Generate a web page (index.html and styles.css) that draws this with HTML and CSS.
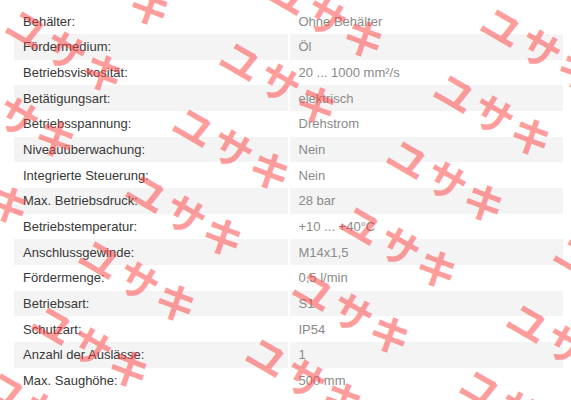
FILE: index.html
```html
<!DOCTYPE html>
<html lang="de">
<head>
<meta charset="utf-8">
<title>Technische Daten</title>
<link rel="stylesheet" href="styles.css">
</head>
<body>
<div class="page">
  <div class="specs">
    <div class="row"><div class="label">Behälter:</div><div class="value">Ohne Behälter</div></div>
    <div class="row"><div class="label">Fördermedium:</div><div class="value">Öl</div></div>
    <div class="row"><div class="label">Betriebsviskosität:</div><div class="value">20 ... 1000 mm²/s</div></div>
    <div class="row"><div class="label">Betätigungsart:</div><div class="value">elektrisch</div></div>
    <div class="row"><div class="label">Betriebsspannung:</div><div class="value">Drehstrom</div></div>
    <div class="row"><div class="label">Niveauüberwachung:</div><div class="value">Nein</div></div>
    <div class="row"><div class="label">Integrierte Steuerung:</div><div class="value">Nein</div></div>
    <div class="row"><div class="label">Max. Betriebsdruck:</div><div class="value">28 bar</div></div>
    <div class="row"><div class="label">Betriebstemperatur:</div><div class="value">+10 ... +40°C</div></div>
    <div class="row"><div class="label">Anschlussgewinde:</div><div class="value">M14x1,5</div></div>
    <div class="row"><div class="label">Fördermenge:</div><div class="value">0,5 l/min</div></div>
    <div class="row"><div class="label">Betriebsart:</div><div class="value">S1</div></div>
    <div class="row"><div class="label">Schutzart:</div><div class="value">IP54</div></div>
    <div class="row"><div class="label">Anzahl der Auslässe:</div><div class="value">1</div></div>
    <div class="row"><div class="label">Max. Saughöhe:</div><div class="value">500 mm</div></div>
  </div>
</div>
<svg class="watermark" width="571" height="400" viewBox="0 0 571 400" aria-hidden="true">
  <g class="wm-text">
    <text transform="translate(113.5 -17) rotate(30)" x="-44 0 44" y="0">ユサキ</text>
    <text transform="translate(327.5 15) rotate(30)" x="-44 0 44" y="0">ユサキ</text>
    <text transform="translate(541.5 47) rotate(30)" x="-44 0 44" y="0">ユサキ</text>
    <text transform="translate(374.5 -51) rotate(30)" x="-44 0 44" y="0">ユサキ</text>
    <text transform="translate(588.5 -19) rotate(30)" x="-44 0 44" y="0">ユサキ</text>
    <text transform="translate(66.5 49) rotate(30)" x="-44 0 44" y="0">ユサキ</text>
    <text transform="translate(280.5 81) rotate(30)" x="-44 0 44" y="0">ユサキ</text>
    <text transform="translate(494.5 113) rotate(30)" x="-44 0 44" y="0">ユサキ</text>
    <text transform="translate(19.5 115) rotate(30)" x="-44 0 44" y="0">ユサキ</text>
    <text transform="translate(233.5 147) rotate(30)" x="-44 0 44" y="0">ユサキ</text>
    <text transform="translate(447.5 179) rotate(30)" x="-44 0 44" y="0">ユサキ</text>
    <text transform="translate(-27.5 181) rotate(30)" x="-44 0 44" y="0">ユサキ</text>
    <text transform="translate(186.5 213) rotate(30)" x="-44 0 44" y="0">ユサキ</text>
    <text transform="translate(400.5 245) rotate(30)" x="-44 0 44" y="0">ユサキ</text>
    <text transform="translate(614.5 277) rotate(30)" x="-44 0 44" y="0">ユサキ</text>
    <text transform="translate(139.5 279) rotate(30)" x="-44 0 44" y="0">ユサキ</text>
    <text transform="translate(353.5 311) rotate(30)" x="-44 0 44" y="0">ユサキ</text>
    <text transform="translate(567.5 343) rotate(30)" x="-44 0 44" y="0">ユサキ</text>
    <text transform="translate(92.5 345) rotate(30)" x="-44 0 44" y="0">ユサキ</text>
    <text transform="translate(306.5 377) rotate(30)" x="-44 0 44" y="0">ユサキ</text>
    <text transform="translate(520.5 409) rotate(30)" x="-44 0 44" y="0">ユサキ</text>
    <text transform="translate(45.5 411) rotate(30)" x="-44 0 44" y="0">ユサキ</text>
    <text transform="translate(259.5 443) rotate(30)" x="-44 0 44" y="0">ユサキ</text>
  </g>
</svg>
</body>
</html>
```

FILE: styles.css
```css
html, body {
  margin: 0;
  padding: 0;
  background: #ffffff;
}

body {
  width: 571px;
  height: 400px;
  overflow: hidden;
  position: relative;
  font-family: "Liberation Sans", Arial, sans-serif;
  font-size: 13px;
}

.page {
  padding: 8.33px 8px 0 14px;
}

.specs {
  width: 549px;
  display: flex;
  flex-direction: column;
}

.row {
  display: grid;
  grid-template-columns: 1fr 1fr;
  column-gap: 2px;
  height: 25.67px;
}

.row:nth-child(even) .label,
.row:nth-child(even) .value {
  background: #f4f4f4;
}

.label,
.value {
  display: flex;
  align-items: center;
  padding-left: 9px;
  white-space: nowrap;
}

.label {
  color: #383838;
}

.value {
  color: #8a8a8a;
}

.watermark {
  position: absolute;
  left: 0;
  top: 0;
  pointer-events: none;
}

.wm-text {
  font-family: "Noto Sans CJK JP", sans-serif;
  font-size: 41px;
  font-weight: 700;
  fill: #ff3c3c;
  fill-opacity: 0.5;
  text-anchor: middle;
  dominant-baseline: central;
}
```
